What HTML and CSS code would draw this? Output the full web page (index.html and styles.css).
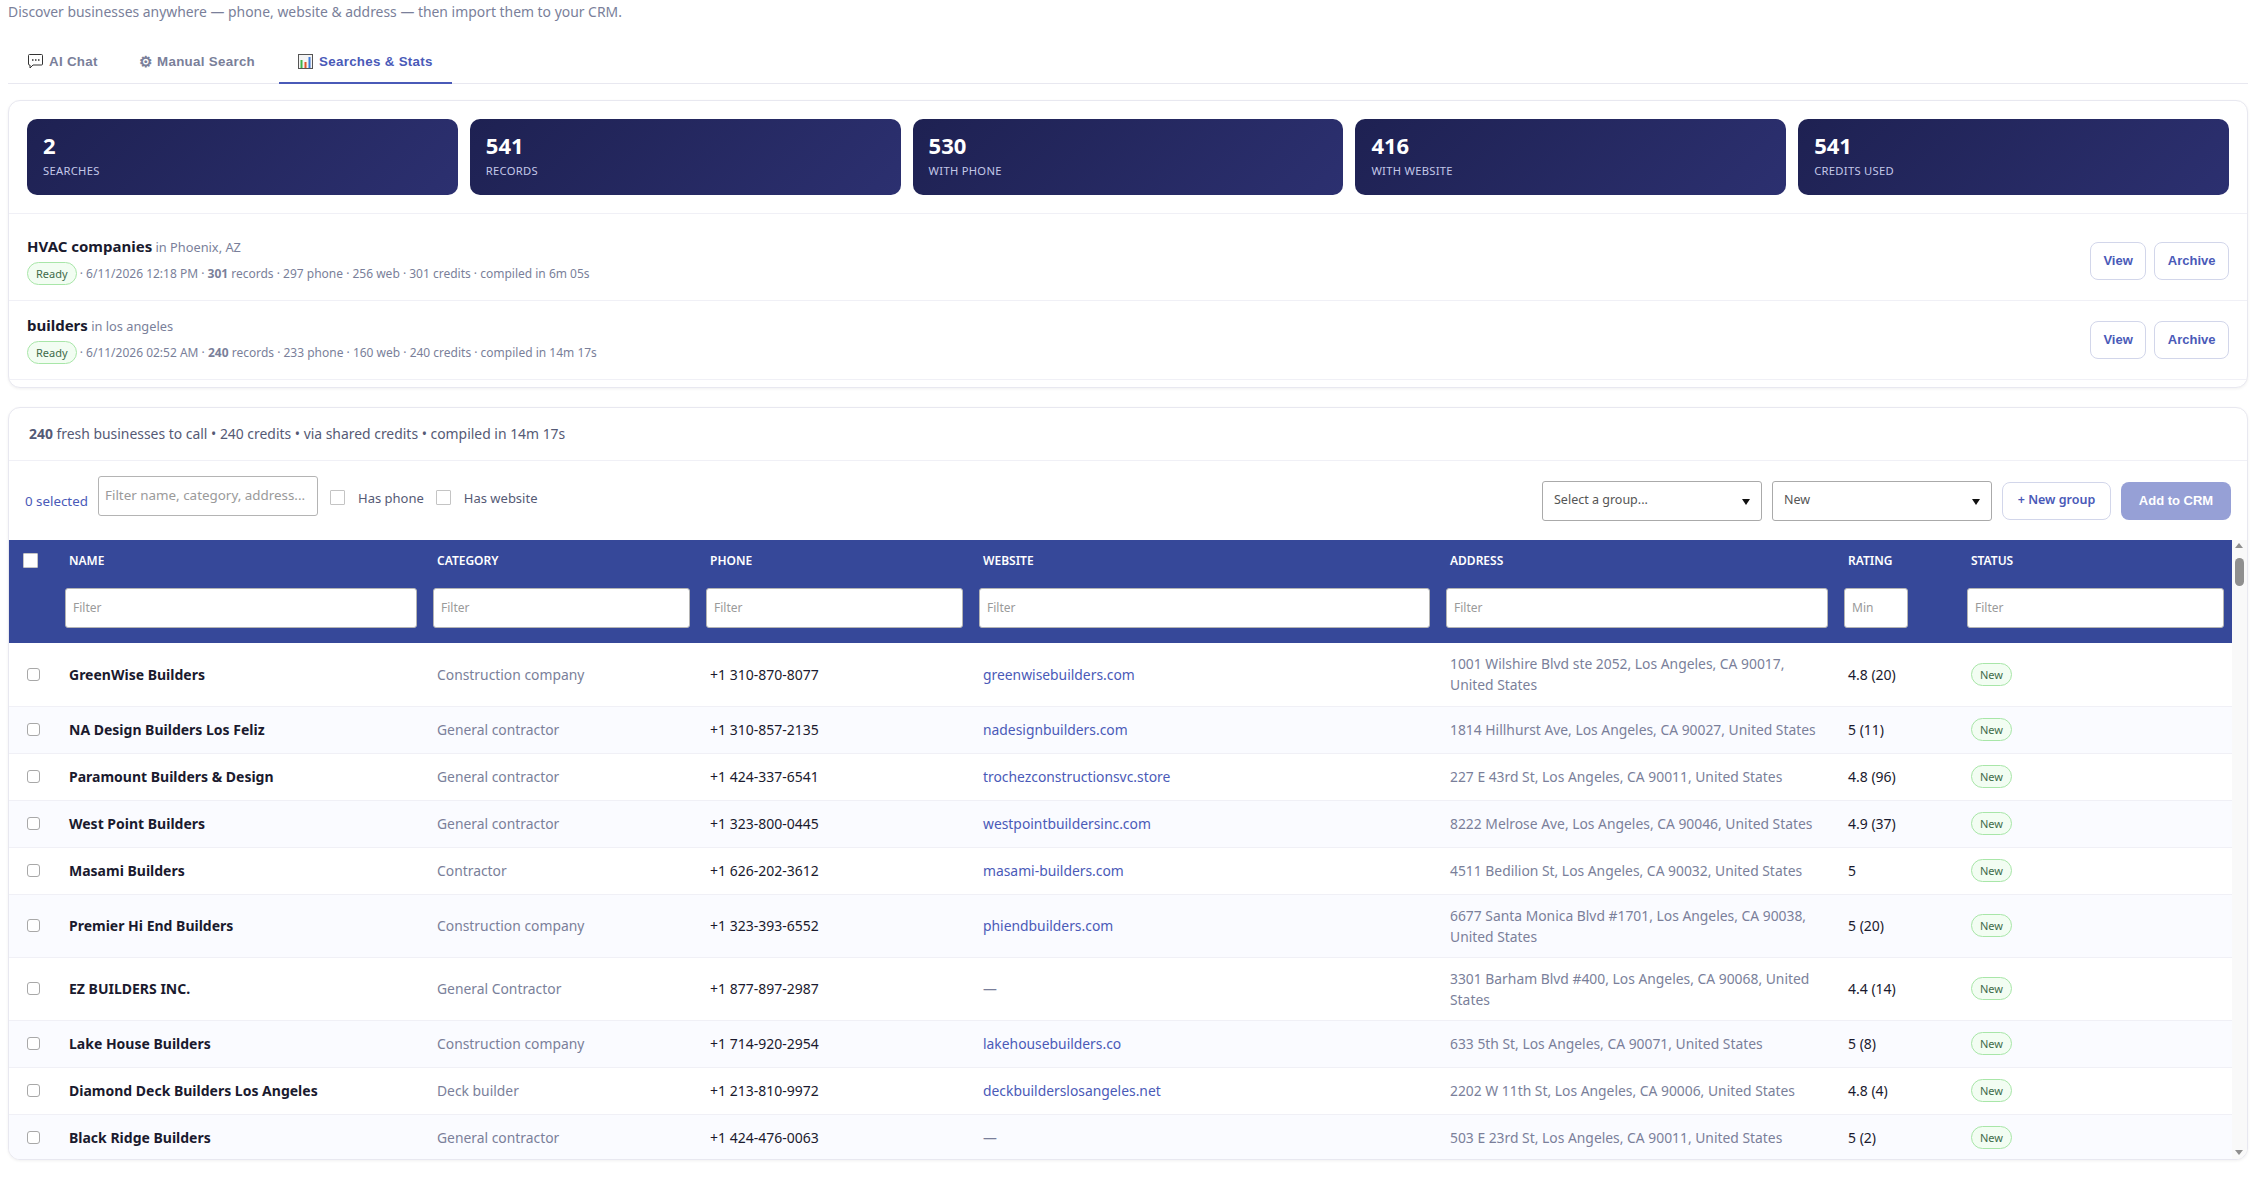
FILE: index.html
```html
<!DOCTYPE html>
<html lang="en">
<head>
    <meta charset="UTF-8">
    <title>Lead Finder</title>
    <link rel="stylesheet" href="styles.css">
</head>
<body>

    <p class="subtitle">Discover businesses anywhere — phone, website &amp; address — then import them to your CRM.</p>

    <nav class="tabs">
        <button class="tab">
            <svg class="tab-icon" width="15" height="15" viewBox="0 0 15 15">
                <path d="M1.5 .5h12a1 1 0 0 1 1 1v8.5a1 1 0 0 1-1 1H5L2 14v-3h-.5a1 1 0 0 1-1-1V1.500a1 1 0 0 1 1-1z" fill="#fff" stroke="#333" stroke-width="1"/>
                <path d="M4 6h1.500M7 6h1.500M10 6h1.500" stroke="#333" stroke-width="1.500"/>
            </svg>AI Chat
        </button>
        <button class="tab"><span class="gear">⚙</span>Manual Search</button>
        <button class="tab active">
            <svg class="tab-icon" width="15" height="15" viewBox="0 0 15 15">
                <rect x=".5" y=".5" width="14" height="14" fill="#f4f4f4" stroke="#555"/>
                <rect x="2.500" y="6" width="2" height="8" fill="#3fb54a"/>
                <rect x="6.500" y="8" width="2" height="6" fill="#e0562a"/>
                <rect x="10.500" y="3" width="2" height="11" fill="#3f78d8"/>
            </svg>Searches &amp; Stats
        </button>
    </nav>

    <section class="card searches-card">
        <div class="stats">
            <div class="stat"><b>2</b><span>Searches</span></div>
            <div class="stat"><b>541</b><span>Records</span></div>
            <div class="stat"><b>530</b><span>With phone</span></div>
            <div class="stat"><b>416</b><span>With website</span></div>
            <div class="stat"><b>541</b><span>Credits used</span></div>
        </div>

        <div class="search-row first">
            <div class="search-info">
                <div class="search-title"><strong>HVAC companies</strong> in Phoenix, AZ</div>
                <div class="search-meta"><span class="pill">Ready</span> · 6/11/2026 12:18 PM · <b>301</b> records · 297 phone · 256 web · 301 credits · compiled in 6m 05s</div>
            </div>
            <button class="btn">View</button>
            <button class="btn">Archive</button>
        </div>
        <div class="search-row">
            <div class="search-info">
                <div class="search-title"><strong>builders</strong> in los angeles</div>
                <div class="search-meta"><span class="pill">Ready</span> · 6/11/2026 02:52 AM · <b>240</b> records · 233 phone · 160 web · 240 credits · compiled in 14m 17s</div>
            </div>
            <button class="btn">View</button>
            <button class="btn">Archive</button>
        </div>
    </section>

    <section class="card results-card">
        <div class="summary"><b>240</b> fresh businesses to call • 240 credits • via shared credits • compiled in 14m 17s</div>

        <div class="toolbar">
            <span class="selected">0 selected</span>
            <input class="toolbar-filter" type="text" placeholder="Filter name, category, address...">
            <label class="check-label"><span class="box"></span>Has phone</label>
            <label class="check-label"><span class="box"></span>Has website</label>
            <span class="spacer"></span>
            <div class="select">Select a group...</div>
            <div class="select">New</div>
            <button class="btn btn-group">+ New group</button>
            <button class="btn-crm">Add to CRM</button>
        </div>

        <div class="table-area">
            <div class="table-clip">
                <table class="leads">
                    <colgroup>
                        <col class="c-check"><col class="c-name"><col class="c-cat"><col class="c-phone"><col class="c-web"><col class="c-addr"><col class="c-rate"><col class="c-status">
                    </colgroup>
                    <thead>
                        <tr class="head-labels">
                            <th><span class="box box-head"></span></th>
                            <th>Name</th><th>Category</th><th>Phone</th><th>Website</th><th>Address</th><th>Rating</th><th>Status</th>
                        </tr>
                        <tr class="head-filters">
                            <th></th>
                            <th><input type="text" placeholder="Filter"></th>
                            <th><input type="text" placeholder="Filter"></th>
                            <th><input type="text" placeholder="Filter"></th>
                            <th><input type="text" placeholder="Filter"></th>
                            <th><input type="text" placeholder="Filter"></th>
                            <th><input class="min-input" type="text" placeholder="Min"></th>
                            <th><input type="text" placeholder="Filter"></th>
                        </tr>
                    </thead>
                    <tbody>
                        <tr class="tall"><td><span class="box box-row"></span></td><td class="name">GreenWise Builders</td><td class="muted">Construction company</td><td>+1 310-870-8077</td><td><a href="#">greenwisebuilders.com</a></td><td class="muted">1001 Wilshire Blvd ste 2052, Los Angeles, CA 90017, United States</td><td>4.8 (20)</td><td><span class="pill">New</span></td></tr>
                        <tr><td><span class="box box-row"></span></td><td class="name">NA Design Builders Los Feliz</td><td class="muted">General contractor</td><td>+1 310-857-2135</td><td><a href="#">nadesignbuilders.com</a></td><td class="muted">1814 Hillhurst Ave, Los Angeles, CA 90027, United States</td><td>5 (11)</td><td><span class="pill">New</span></td></tr>
                        <tr><td><span class="box box-row"></span></td><td class="name">Paramount Builders &amp; Design</td><td class="muted">General contractor</td><td>+1 424-337-6541</td><td><a href="#">trochezconstructionsvc.store</a></td><td class="muted">227 E 43rd St, Los Angeles, CA 90011, United States</td><td>4.8 (96)</td><td><span class="pill">New</span></td></tr>
                        <tr><td><span class="box box-row"></span></td><td class="name">West Point Builders</td><td class="muted">General contractor</td><td>+1 323-800-0445</td><td><a href="#">westpointbuildersinc.com</a></td><td class="muted">8222 Melrose Ave, Los Angeles, CA 90046, United States</td><td>4.9 (37)</td><td><span class="pill">New</span></td></tr>
                        <tr><td><span class="box box-row"></span></td><td class="name">Masami Builders</td><td class="muted">Contractor</td><td>+1 626-202-3612</td><td><a href="#">masami-builders.com</a></td><td class="muted">4511 Bedilion St, Los Angeles, CA 90032, United States</td><td>5</td><td><span class="pill">New</span></td></tr>
                        <tr class="tall"><td><span class="box box-row"></span></td><td class="name">Premier Hi End Builders</td><td class="muted">Construction company</td><td>+1 323-393-6552</td><td><a href="#">phiendbuilders.com</a></td><td class="muted">6677 Santa Monica Blvd #1701, Los Angeles, CA 90038, United States</td><td>5 (20)</td><td><span class="pill">New</span></td></tr>
                        <tr class="tall"><td><span class="box box-row"></span></td><td class="name">EZ BUILDERS INC.</td><td class="muted">General Contractor</td><td>+1 877-897-2987</td><td class="muted">—</td><td class="muted">3301 Barham Blvd #400, Los Angeles, CA 90068, United States</td><td>4.4 (14)</td><td><span class="pill">New</span></td></tr>
                        <tr><td><span class="box box-row"></span></td><td class="name">Lake House Builders</td><td class="muted">Construction company</td><td>+1 714-920-2954</td><td><a href="#">lakehousebuilders.co</a></td><td class="muted">633 5th St, Los Angeles, CA 90071, United States</td><td>5 (8)</td><td><span class="pill">New</span></td></tr>
                        <tr><td><span class="box box-row"></span></td><td class="name">Diamond Deck Builders Los Angeles</td><td class="muted">Deck builder</td><td>+1 213-810-9972</td><td><a href="#">deckbuilderslosangeles.net</a></td><td class="muted">2202 W 11th St, Los Angeles, CA 90006, United States</td><td>4.8 (4)</td><td><span class="pill">New</span></td></tr>
                        <tr><td><span class="box box-row"></span></td><td class="name">Black Ridge Builders</td><td class="muted">General contractor</td><td>+1 424-476-0063</td><td class="muted">—</td><td class="muted">503 E 23rd St, Los Angeles, CA 90011, United States</td><td>5 (2)</td><td><span class="pill">New</span></td></tr>
                    </tbody>
                </table>
            </div>
            <div class="scrollbar">
                <span class="arrow-up"></span>
                <span class="thumb"></span>
                <span class="arrow-down"></span>
            </div>
        </div>
    </section>

</body>
</html>
```

FILE: styles.css
```css
/* === base === */
html, body {
    margin: 0;
    height: 100%;
    overflow: hidden;
    background: #ffffff;
}

body {
    padding: 0 16px 0 8px;
    font-family: "Noto Sans", sans-serif;
    font-size: 14px;
    color: #1a1a2e;
    box-sizing: border-box;
}

.subtitle {
    margin: 0;
    height: 45px;
    padding-top: 2px;
    box-sizing: border-box;
    font-size: 13.92px;
    line-height: 20px;
    color: #7a7f9a;
}

/* === tabs === */
.tabs {
    display: flex;
    gap: 4px;
    height: 38px;
    border-bottom: 1px solid #e8e8f0;
    margin-bottom: 16px;
}

.tab {
    display: flex;
    align-items: center;
    height: 39px;
    padding: 0 20px 4px;
    box-sizing: border-box;
    border: 0;
    border-bottom: 2px solid transparent;
    background: none;
    font-family: "Liberation Sans", Arial, sans-serif;
    font-size: 13.33px;
    font-weight: 700;
    letter-spacing: 0.3px;
    color: #7a7f9a;
}

.tab.active {
    padding: 0 19px 4px;
    color: #4a5ab8;
    border-bottom-color: #4a5ab8;
}

.tab-icon {
    flex: none;
    margin-right: 6px;
}

.gear {
    margin: 0 5px 0 -3px;
    font-size: 15px;
    line-height: 1;
}

/* === cards === */
.card {
    border: 1px solid #e8e8f0;
    border-radius: 12px;
    background: #fff;
    overflow: hidden;
    box-shadow: 0 1px 3px rgba(0, 0, 0, 0.06);
}

.searches-card {
    height: 288px;
    box-sizing: border-box;
    margin-bottom: 19px;
}

.results-card {
    height: 753px;
    box-sizing: border-box;
}

.stats {
    display: grid;
    grid-template-columns: repeat(5, 1fr);
    gap: 12px;
    padding: 18px 18px;
    border-bottom: 1px solid #f0f0f6;
}

.stat {
    height: 76px;
    box-sizing: border-box;
    padding: 11px 16px;
    border-radius: 10px;
    background: linear-gradient(135deg, #1e2152, #2c3070);
    color: #fff;
}

.stat b {
    display: block;
    font-size: 22px;
    line-height: 30px;
    font-weight: 700;
}

.stat span {
    display: block;
    margin-top: 3px;
    font-size: 11.2px;
    line-height: 15px;
    letter-spacing: 0.3px;
    text-transform: uppercase;
    color: #c4c8e8;
}

.search-row {
    display: flex;
    align-items: center;
    gap: 8px;
    height: 79px;
    box-sizing: border-box;
    padding: 0 18px;
    border-bottom: 1px solid #f0f0f6;
}

.search-row.first {
    height: 87px;
    padding-top: 8px;
}

.search-info {
    flex: 1;
}

.search-title {
    font-size: 12.8px;
    line-height: 20px;
    color: #7a7f9a;
}

.search-title strong {
    font-size: 15px;
    color: #1a1a2e;
}

.search-meta {
    margin-top: 5px;
    font-size: 12px;
    line-height: 24px;
    color: #7a7f9a;
}

.pill {
    display: inline-block;
    padding: 0 8px;
    border: 1px solid #a8e6a8;
    border-radius: 12px;
    background: #f2fdf2;
    font-size: 11px;
    line-height: 21px;
    color: #3f6b4a;
}

.btn {
    height: 38px;
    padding: 0 12.5px 2px;
    border: 1px solid #d2d6ea;
    border-radius: 8px;
    background: #fff;
    font-family: "Liberation Sans", Arial, sans-serif;
    font-size: 13px;
    font-weight: 700;
    color: #4a5ab8;
}

/* === toolbar === */
.summary {
    height: 53px;
    padding-left: 20px;
    border-bottom: 1px solid #f0f0f6;
    font-size: 13.92px;
    line-height: 51px;
    color: #555a75;
    box-sizing: border-box;
}

.toolbar {
    display: flex;
    align-items: center;
    height: 79px;
    padding: 0 16px;
    box-sizing: border-box;
}

.selected {
    width: 73px;
    font-size: 13.33px;
    color: #4a5ab8;
}

.toolbar-filter {
    width: 220px;
    height: 40px;
    box-sizing: border-box;
    padding: 0 0 2px 6px;
    border: 1px solid #b4b4b4;
    border-radius: 3px;
    font-family: "Noto Sans", sans-serif;
    font-size: 13.4px;
    margin: 0 12px 10px 0;
}

::placeholder {
    color: #9a9a9a;
}

.check-label {
    display: flex;
    align-items: center;
    margin: 0 12px 5px 0;
    font-size: 13px;
    color: #555a75;
}

.box {
    display: inline-block;
    width: 15px;
    height: 15px;
    box-sizing: border-box;
    border: 1px solid #c4c4c4;
    border-radius: 1px;
    background: #fff;
}

.check-label .box {
    margin: 0 13px 2px 0;
}

.spacer {
    flex: 1;
}

.select {
    position: relative;
    width: 220px;
    height: 40px;
    box-sizing: border-box;
    margin-right: 10px;
    padding-left: 11px;
    border: 1px solid #aaaaaa;
    border-radius: 3px;
    font-size: 12.5px;
    line-height: 36px;
    color: #555;
}

.select::after {
    content: "";
    position: absolute;
    right: 11px;
    top: 17px;
    border: 4.5px solid transparent;
    border-top: 6px solid #111;
    border-bottom: 0;
}

.btn-group {
    width: 109px;
    padding: 0 0 2px;
    margin-right: 10px;
    font-family: "Noto Sans", sans-serif;
    font-size: 12.5px;
    font-weight: 600;
}

.btn-crm {
    width: 110px;
    height: 38px;
    padding-bottom: 2px;
    border: 0;
    border-radius: 8px;
    background: #96a0d6;
    font-family: "Liberation Sans", Arial, sans-serif;
    font-size: 13px;
    font-weight: 700;
    color: #fff;
}

/* === table === */
.table-area {
    display: flex;
    height: 620px;
}

.table-clip {
    flex: 1;
    overflow: hidden;
}

.leads {
    width: 2223px;
    table-layout: fixed;
    border-collapse: collapse;
}

.c-check { width: 48px; }
.c-name { width: 368px; }
.c-cat { width: 273px; }
.c-phone { width: 273px; }
.c-web { width: 467px; }
.c-addr { width: 398px; }
.c-rate { width: 123px; }
.c-status { width: 273px; }

.leads thead {
    background: #364899;
    color: #fff;
}

.head-labels th {
    height: 48px;
    box-sizing: border-box;
    padding: 0 12px 7px;
    font-size: 12px;
    font-weight: 600;
    text-align: left;
    text-transform: uppercase;
    vertical-align: middle;
}

.head-filters th {
    height: 55px;
    box-sizing: border-box;
    padding: 0 8px 15px;
    vertical-align: top;
}

.head-filters input {
    display: block;
    width: 100%;
    height: 40px;
    box-sizing: border-box;
    padding: 0 7px 1px;
    border: 1px solid #b4b4b4;
    border-radius: 3px;
    font-family: "Noto Sans", sans-serif;
    font-size: 12px;
}

.head-filters .min-input {
    width: 64px;
}

.leads td {
    height: 47px;
    box-sizing: border-box;
    padding: 0 12px;
    border-bottom: 1px solid #f0f0f6;
    font-size: 14px;
    line-height: 21px;
}

.leads tr.tall td {
    height: 63px;
}

.leads tbody tr:nth-child(even) {
    background: #fafbff;
}

.leads .name {
    font-weight: 700;
}

.leads .muted {
    font-size: 13.86px;
    color: #7a7f9a;
}

.leads a {
    font-size: 13.86px;
    color: #4a5ab8;
    text-decoration: none;
}

.box-head {
    display: block;
    border: 1px solid #c4c4c4;
    margin-left: 2px;
}

.box-row {
    display: block;
    width: 13px;
    height: 13px;
    margin-left: 6px;
    border-color: #a8a8a8;
    border-radius: 3px;
}

.leads td:first-child, .leads th:first-child {
    padding-left: 12px;
    padding-right: 0;
}

/* === scrollbar === */
.scrollbar {
    position: relative;
    width: 15px;
    background: #f9f9f9;
}

.thumb {
    position: absolute;
    left: 3px;
    top: 18px;
    width: 9px;
    height: 28px;
    border-radius: 5px;
    background: #8f8f8f;
}

.arrow-up, .arrow-down {
    position: absolute;
    left: 3px;
    border: 4.5px solid transparent;
}

.arrow-up {
    top: 3px;
    border-top: 0;
    border-bottom: 5px solid #8f8f8f;
}

.arrow-down {
    bottom: 5px;
    border-bottom: 0;
    border-top: 5px solid #8f8f8f;
}
```
